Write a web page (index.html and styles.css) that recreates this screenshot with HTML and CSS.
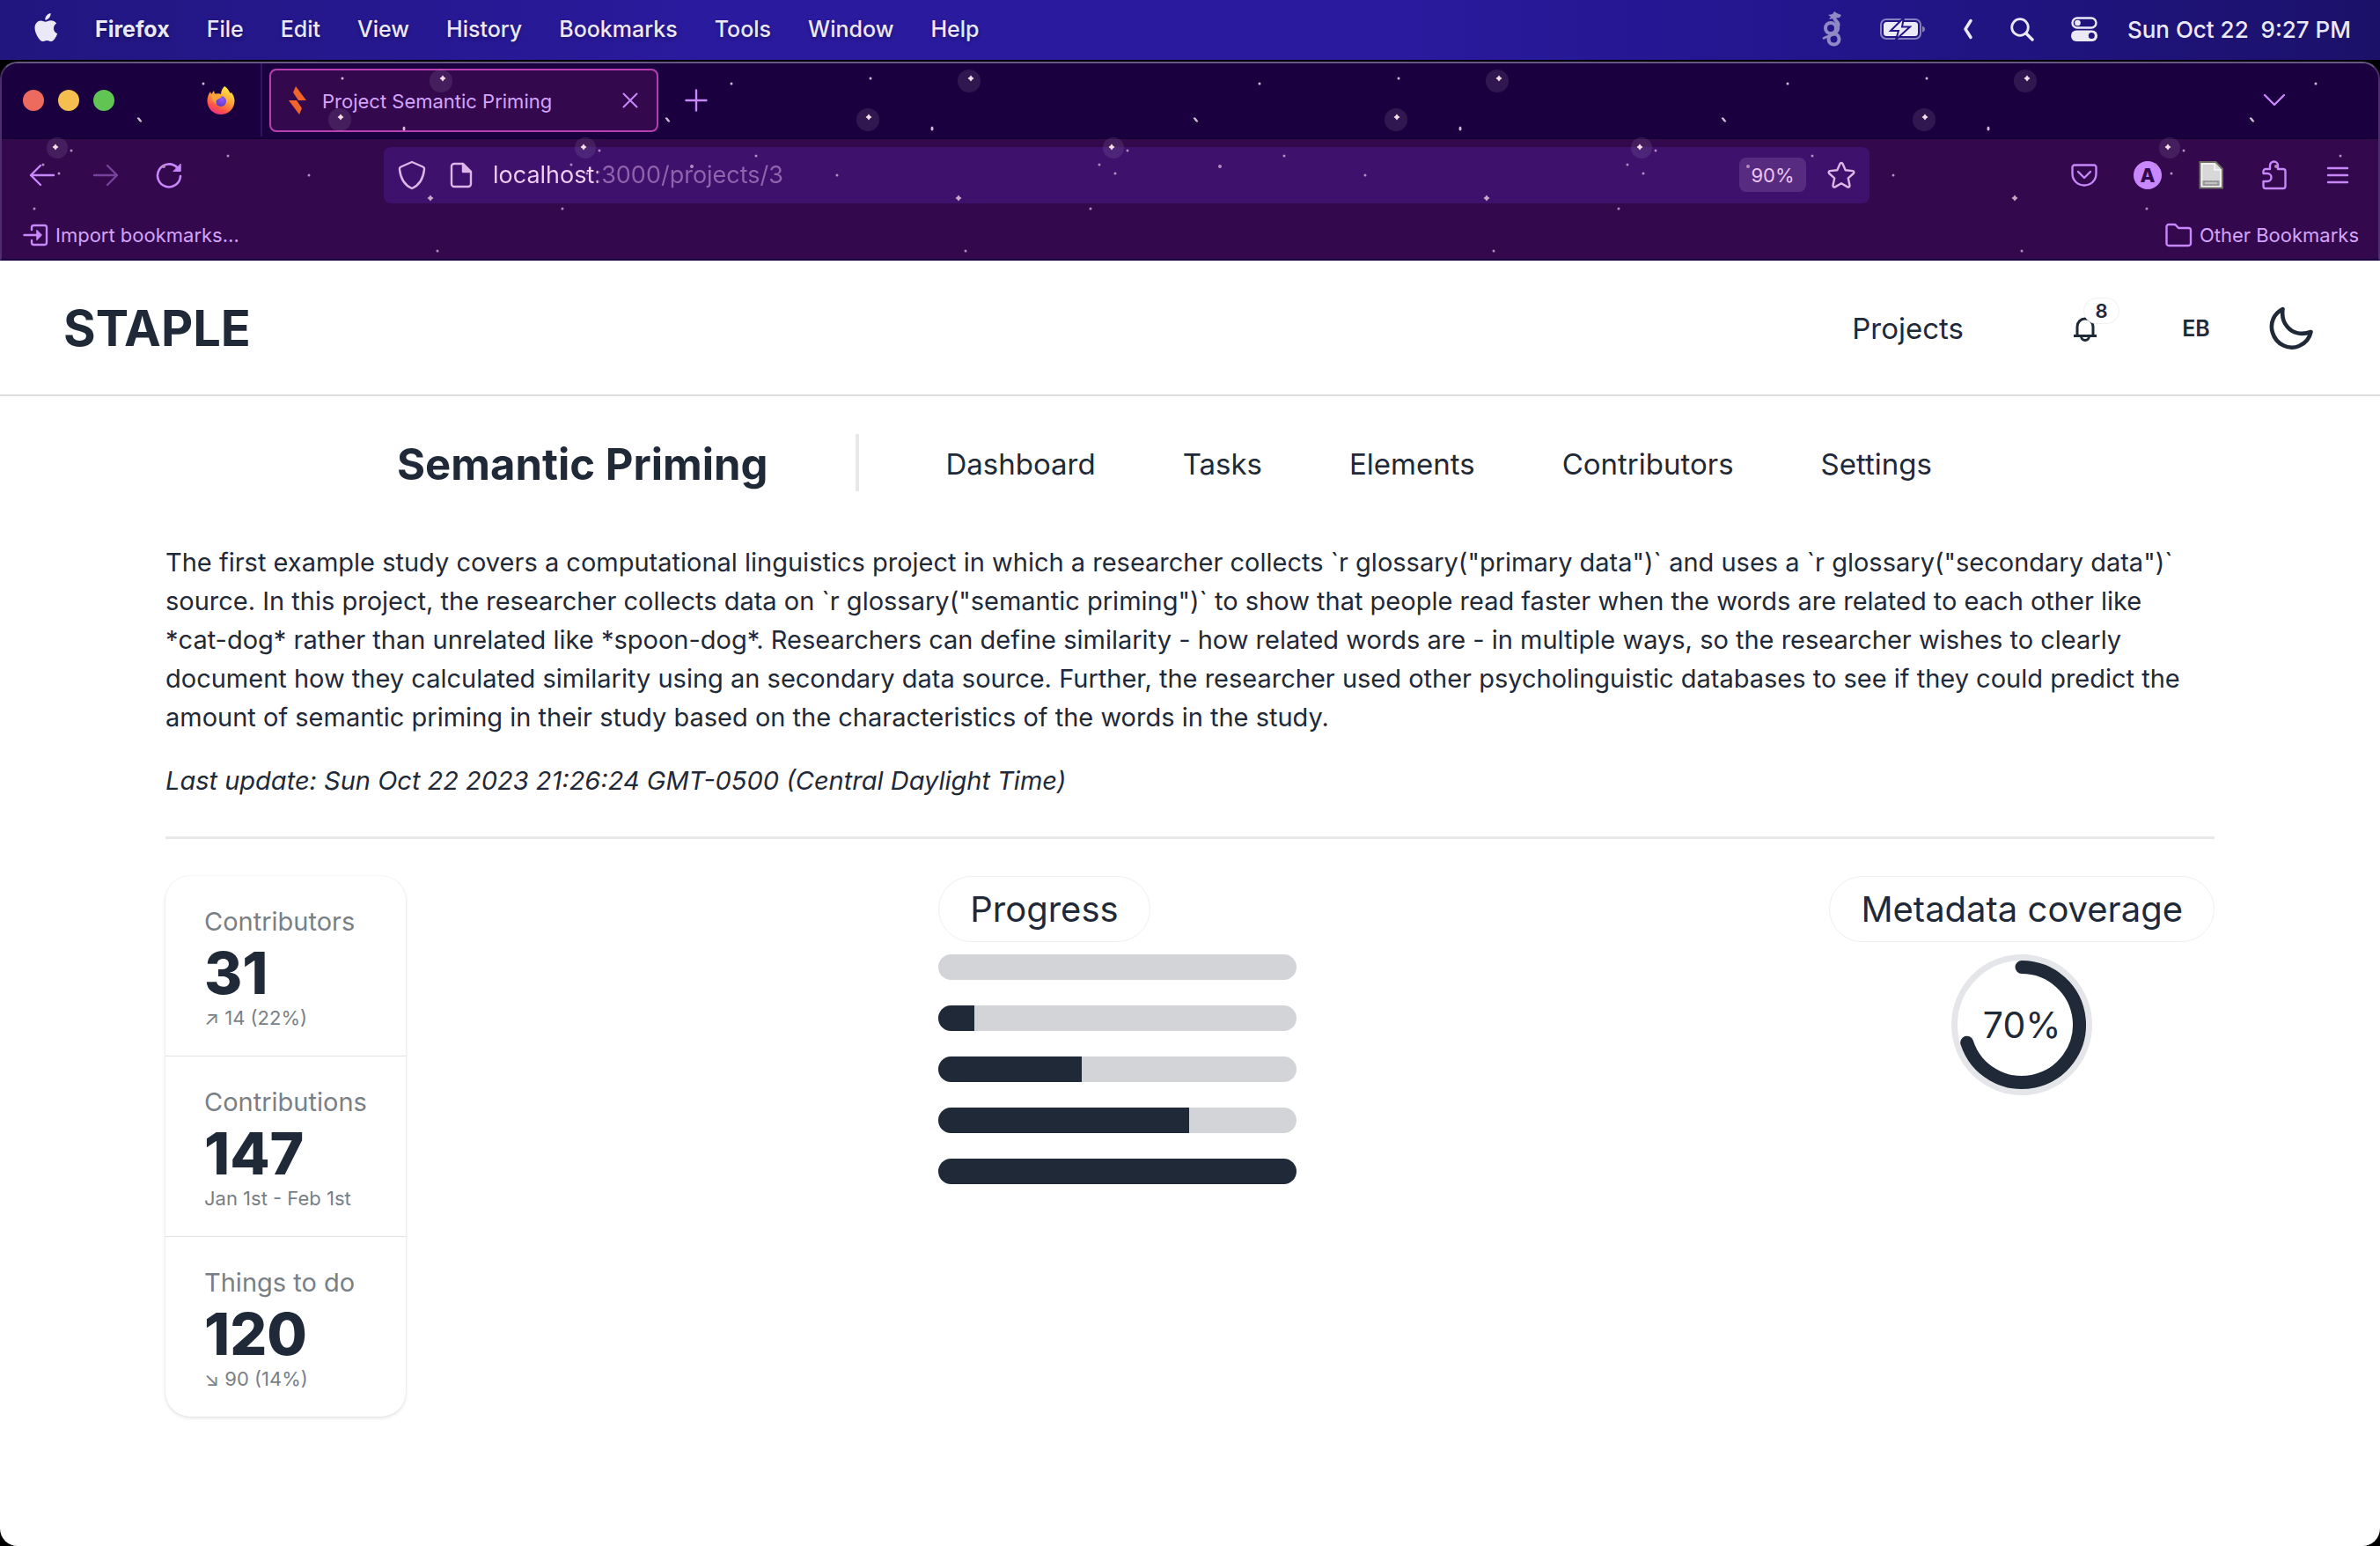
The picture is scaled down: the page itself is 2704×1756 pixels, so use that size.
FILE: index.html
```html
<!DOCTYPE html>
<html lang="en">
<head>
<meta charset="utf-8">
<title>Project Semantic Priming</title>
<link rel="stylesheet" href="styles.css">
</head>
<body>
<header class="menubar">
  <nav class="menubar-menus" aria-label="Application menu">
    <button class="menu apple" aria-label="Apple menu">
      <svg width="28" height="34" viewBox="0 0 28 34" fill="currentColor"><path d="M19.6 0c.2 2-.6 3.900-1.800 5.300-1.200 1.500-2.900 2.500-4.500 2.300-.2-1.900.7-3.800 1.800-5.100C16.300 1.200 18.200.1 19.600 0z"/><path d="M26.300 11.600c-2.100 1.300-3.300 3.200-3.300 5.700 0 2.800 1.600 5 4.200 6-.6 1.900-1.600 3.800-2.800 5.500-1.300 1.900-2.500 3.200-4.300 3.200-1.900 0-2.500-1.100-4.800-1.100-2.300 0-3 1.100-4.800 1.100-1.900 0-3.300-1.700-4.600-3.600C3.500 25 1.500 20.600 1.500 16.800c0-5.300 3.400-8.400 6.900-8.400 2.200 0 3.900 1.300 5.400 1.300 1.400 0 3.300-1.500 5.900-1.500 2.400 0 5 1.100 6.600 3.400z"/></svg>
    </button>
    <button class="menu app-name">Firefox</button>
    <button class="menu">File</button>
    <button class="menu">Edit</button>
    <button class="menu">View</button>
    <button class="menu">History</button>
    <button class="menu">Bookmarks</button>
    <button class="menu">Tools</button>
    <button class="menu">Window</button>
    <button class="menu">Help</button>
  </nav>
  <div class="menubar-status">
    <svg class="dim" width="24" height="40" viewBox="0 0 24 40" fill="none" stroke="currentColor"><circle cx="10" cy="19" r="6" stroke-width="4"/><circle cx="13.500" cy="31.500" r="6" stroke-width="4"/><path d="M16 13c5 5 3 10-2 13-4 2-9 2-13 5" stroke-width="2.500"/><path d="M18 17c3-5-5-6-4-11" stroke-width="4"/><path d="M7 4l5-1 2-3 3 2 5 2-2 3-7 1-5 1 2-3z" fill="currentColor" stroke="none"/></svg>
    <svg width="52" height="26" viewBox="0 0 52 26"><rect x="1" y="2" width="45" height="22" rx="6" fill="none" stroke="currentColor" stroke-width="2" opacity=".5"/><rect x="4" y="5" width="39" height="16" rx="3.500" fill="currentColor"/><path d="M48 9.500c4 1.300 4 6 0 7.200z" fill="currentColor" opacity=".5"/><path d="M27 0L12 15h9l-3 10L34 10.500h-9z" fill="currentColor" stroke="#231589" stroke-width="2"/></svg>
    <svg width="12" height="24" viewBox="0 0 12 24" fill="none" stroke="currentColor" stroke-width="3.500" stroke-linecap="round" stroke-linejoin="round"><path d="M9 2.500L3 12l6 9.500"/></svg>
    <svg width="27" height="27" viewBox="0 0 27 27" fill="none" stroke="currentColor" stroke-width="2.800" stroke-linecap="round"><circle cx="11" cy="11" r="9.300"/><path d="M18 18l7 7" stroke-width="3.500"/></svg>
    <svg width="30" height="28" viewBox="0 0 30 28"><rect x="1.500" y="1.500" width="27" height="11" rx="5.500" fill="none" stroke="currentColor" stroke-width="2.400"/><circle cx="7.500" cy="7" r="3.300" fill="currentColor"/><rect y="15.500" width="30" height="12.500" rx="6" fill="currentColor"/><circle cx="23.300" cy="21.500" r="3.500" fill="#211480"/></svg>
    <time class="clock">Sun Oct 22&nbsp; 9:27 PM</time>
  </div>
</header>

<section class="chrome" aria-label="Browser">
  <div class="tabstrip">
    <div class="lights">
      <button class="light close" aria-label="Close window"></button>
      <button class="light minimise" aria-label="Minimise window"></button>
      <button class="light expand" aria-label="Expand window"></button>
    </div>
    <button class="pinned" aria-label="Firefox View">
      <svg width="32" height="32" viewBox="0 0 32 32">
        <defs>
          <linearGradient id="fire" x1=".8" y1="0" x2=".3" y2="1"><stop offset="0" stop-color="#fff44f"/><stop offset=".45" stop-color="#ffa436"/><stop offset=".8" stop-color="#ff4f4a"/><stop offset="1" stop-color="#e8308a"/></linearGradient>
          <radialGradient id="globe" cx=".6" cy=".3" r=".8"><stop offset="0" stop-color="#9059ff"/><stop offset="1" stop-color="#5a37b8"/></radialGradient>
        </defs>
        <path d="M20 0c5 3 5 6 7 8l1-1c2 3 3.500 6 3.500 9.500C31.500 25 25 32 16 32S.5 25 .5 16.500C.5 12 2 9 4 6l1 3 3-4 1 4c3-1 5-1 7 0 0-4 2-7 4-9z" fill="url(#fire)"/>
        <circle cx="16" cy="17" r="6" fill="url(#globe)"/>
        <path d="M5 10c3-2 6-2 8 0l4 1c-1 3-4 3-5 4-2 1-2 3-1 5-4-2-6-6-6-10z" fill="#ffa436"/>
      </svg>
    </button>
    <div class="tab">
      <svg width="20" height="32" viewBox="0 0 20 32" fill="#f0652b"><path d="M8 0l12 16H11L5 7z"/><path d="M0 16h9l6 9-3 7z"/></svg>
      <span class="tab-title">Project Semantic Priming</span>
      <button class="icon-button small" aria-label="Close tab"><svg width="18" height="18" viewBox="0 0 18 18" fill="none" stroke="currentColor" stroke-width="2" stroke-linecap="round"><path d="M1.500 1.500l15 15M16.500 1.500l-15 15"/></svg></button>
    </div>
    <button class="icon-button new-tab" aria-label="New tab"><svg width="26" height="26" viewBox="0 0 26 26" fill="none" stroke="currentColor" stroke-width="2.400" stroke-linecap="round"><path d="M13 1.500v23M1.500 13h23"/></svg></button>
    <button class="icon-button list-tabs" aria-label="List all tabs"><svg width="26" height="16" viewBox="0 0 26 16" fill="none" stroke="currentColor" stroke-width="2.400" stroke-linecap="round" stroke-linejoin="round"><path d="M2 2l11 11L24 2"/></svg></button>
  </div>

  <div class="toolbar">
    <div class="tools">
      <button class="icon-button" aria-label="Back"><svg width="30" height="26" viewBox="0 0 30 26" fill="none" stroke="currentColor" stroke-width="2.400" stroke-linecap="round" stroke-linejoin="round"><path d="M28 13H2M13 2L2 13l11 11"/></svg></button>
      <button class="icon-button faded" aria-label="Forward"><svg width="30" height="26" viewBox="0 0 30 26" fill="none" stroke="currentColor" stroke-width="2.400" stroke-linecap="round" stroke-linejoin="round"><path d="M2 13h26M17 2l11 11-11 11"/></svg></button>
      <button class="icon-button" aria-label="Reload"><svg width="30" height="30" viewBox="0 0 30 30" fill="none" stroke="currentColor" stroke-width="2.600" stroke-linecap="round" stroke-linejoin="round"><path d="M24.500 6.500A13 13 0 1 0 28 16"/><path d="M28.200 2.500v8h-8z" fill="currentColor" stroke-width="1"/></svg></button>
    </div>
    <div class="address">
      <svg width="32" height="34" viewBox="0 0 32 34" fill="none" stroke="currentColor" stroke-width="2.400" stroke-linejoin="round"><path d="M16 2l12.500 5.500c1.200.5 1.700 1.500 1.500 3C29 20 25 28 16 32 7 28 3 20 2 10.500c-.2-1.500.3-2.500 1.500-3z"/></svg>
      <svg width="26" height="30" viewBox="0 0 26 30" fill="none" stroke="currentColor" stroke-width="2.400" stroke-linejoin="round"><path d="M5 2h10l9 9v14a3 3 0 0 1-3 3H5a3 3 0 0 1-3-3V5a3 3 0 0 1 3-3z"/><path d="M15 2v9h9z" fill="currentColor"/></svg>
      <input class="url" type="text" aria-label="Address" value="localhost:3000/projects/3">
      <button class="zoom">90%</button>
      <button class="icon-button" aria-label="Bookmark this page"><svg width="34" height="32" viewBox="0 0 34 32" fill="none" stroke="currentColor" stroke-width="2.400" stroke-linejoin="round"><path d="M15.500 3c.6-1.300 2.400-1.300 3 0l3.200 7.200 8.200.9c1.500.2 2 1.900.9 2.900l-6 5.400 1.700 8.200c.3 1.500-1.200 2.500-2.400 1.800L17 25.200l-7.100 4.200c-1.200.7-2.700-.3-2.400-1.800l1.700-8.200-6-5.400c-1.100-1-.6-2.700.9-2.900l8.200-.9z"/></svg></button>
    </div>
    <div class="tools">
      <button class="icon-button" aria-label="Save to Pocket"><svg width="30" height="26" viewBox="0 0 30 26" fill="none" stroke="currentColor" stroke-width="2.400" stroke-linecap="round" stroke-linejoin="round"><path d="M4 1.500h22a2.500 2.500 0 0 1 2.500 2.500v7c0 8-6 13.500-13.500 13.500S1.500 19 1.500 11V4A2.500 2.500 0 0 1 4 1.500z"/><path d="M8 9l7 7 7-7"/></svg></button>
      <button class="icon-button" aria-label="Account"><span class="avatar">A</span></button>
      <button class="icon-button" aria-label="Page extension"><svg width="28" height="32" viewBox="0 0 28 32"><path d="M1.500 1h18l7.500 8v21.500h-25.500z" fill="#dedede" stroke="#6e6e62" stroke-width="2"/><path d="M3.500 3h14.500v7h7v18.500h-21.500z" fill="#d8d8d8" stroke="#f8f8f8" stroke-width="1.500"/><rect x="4.500" y="22" width="19" height="6" fill="#999"/><rect x="7" y="24" width="14" height="2" fill="#c4c4c4"/></svg></button>
      <button class="icon-button" aria-label="Extensions"><svg width="28" height="34" viewBox="0 0 28 34" fill="none" stroke="currentColor" stroke-width="2.400" stroke-linejoin="round"><path d="M4 10h5V6a4.500 4.500 0 0 1 9 0v4h6a2.500 2.500 0 0 1 2.500 2.500v17A2.500 2.500 0 0 1 24 32H4a2.500 2.500 0 0 1-2.500-2.500V24H6a4.500 4.500 0 0 0 0-9H1.500v-2.500A2.500 2.500 0 0 1 4 10z"/></svg></button>
      <button class="icon-button" aria-label="Open application menu"><svg width="26" height="22" viewBox="0 0 26 22" fill="none" stroke="currentColor" stroke-width="2.400" stroke-linecap="round"><path d="M2 3h22M2 11h22M2 19h22"/></svg></button>
    </div>
  </div>

  <div class="bookmarks">
    <button class="bookmark"><svg width="29" height="26" viewBox="0 0 29 26" fill="none" stroke="currentColor" stroke-width="2.400" stroke-linecap="round" stroke-linejoin="round"><path d="M10 7V4.500A2.500 2.500 0 0 1 12.500 2h12A2.500 2.500 0 0 1 27 4.500v17a2.500 2.500 0 0 1-2.500 2.500h-12a2.500 2.500 0 0 1-2.500-2.500V19M1.500 13H16"/><path d="M16 7.500l5.500 5.500-5.500 5.500z" fill="currentColor" stroke-width="1"/></svg>Import bookmarks…</button>
    <button class="bookmark"><svg width="31" height="28" viewBox="0 0 31 28" fill="none" stroke="currentColor" stroke-width="2.400" stroke-linejoin="round"><path d="M4 2h6c1 0 1.800.4 2.300 1l2.700 3H26.500A2.500 2.500 0 0 1 29 8.500v15a2.500 2.500 0 0 1-2.500 2.500H4a2.500 2.500 0 0 1-2.500-2.500v-19A2.500 2.500 0 0 1 4 2z"/></svg>Other Bookmarks</button>
  </div>

  <svg class="stars" width="100%" height="100%" aria-hidden="true">
    <defs>
      <pattern id="sky" width="600" height="400" patternUnits="userSpaceOnUse" patternTransform="translate(-2 -72)">
        <g fill="#fff" fill-opacity=".09"><circle cx="501" cy="92" r="13"/><circle cx="386" cy="136" r="13"/><circle cx="65" cy="168" r="12"/></g>
        <g fill="#f6dfe8"><path id="spark" d="M503 85.500l1.500 2 2 1.500-2 1.500-1.500 2-1.500-2-2-1.500 2-1.500z"/><use href="#spark" x="-116" y="44"/><use href="#spark" x="-440" y="78"/><use href="#spark" x="-14" y="136" opacity=".75"/></g>
        <g fill="#d9b8d8"><circle cx="231" cy="95" r="1.500"/><circle cx="389" cy="89" r="1.500"/><ellipse cx="459" cy="146" rx="1.500" ry="2.500"/><path d="M156 134l2 0 3 4-2 0z" stroke="#d9b8d8"/></g>
        <g fill="#b98abf"><circle cx="81" cy="171" r="1.500"/><circle cx="49" cy="187" r="1.500"/><circle cx="67" cy="197" r="1.500"/><circle cx="259" cy="177" r="1.500"/><circle cx="351" cy="199" r="1.500"/><circle cx="186" cy="189" r="2"/><circle cx="39" cy="237" r="1.500"/><circle cx="497" cy="285" r="1.500"/></g>
      </pattern>
    </defs>
    <rect width="100%" height="100%" fill="url(#sky)"/>
  </svg>
</section>

<div class="page">
  <header class="site-header">
    <a class="brand" href="#">STAPLE</a>
    <nav class="site-nav">
      <a class="projects" href="#">Projects</a>
      <button class="round" aria-label="Notifications">
        <svg width="28" height="32" viewBox="0 0 28 32" fill="none" stroke="currentColor" stroke-width="3" stroke-linejoin="round"><path d="M5 23.500V14a9 9 0 0 1 18 0v9.500"/><path d="M1 24.500h26M9.500 25a4.500 4.500 0 0 0 9 0"/></svg>
        <span class="badge">8</span>
      </button>
      <button class="round">EB</button>
      <button class="theme" aria-label="Toggle theme"><svg width="50" height="50" viewBox="0 0 50 50" fill="none" stroke="currentColor" stroke-width="4.600" stroke-linejoin="round"><path d="M15.500 3C5.500 8 .5 19 4 30c4 13 18 20 30 15 7-3 12-9 13.500-16C37 33 27 30.500 21 23.500 16 18 14.500 10 15.500 3z"/></svg></button>
    </nav>
  </header>

  <main class="content">
    <nav class="project-nav">
      <h1 class="project-title">Semantic Priming</h1>
      <ul class="project-links">
        <li><a href="#">Dashboard</a></li>
        <li><a href="#">Tasks</a></li>
        <li><a href="#">Elements</a></li>
        <li><a href="#">Contributors</a></li>
        <li><a href="#">Settings</a></li>
      </ul>
    </nav>

    <p class="description">The first example study covers a computational linguistics project in which a researcher collects `r glossary("primary data")` and uses a `r glossary("secondary data")` source. In this project, the researcher collects data on `r glossary("semantic priming")` to show that people read faster when the words are related to each other like <span class="term">*cat-dog*</span> rather than unrelated like <span class="term">*spoon-dog*</span>. Researchers can define similarity - how related words are - in multiple ways, so the researcher wishes to clearly document how they calculated similarity using an secondary data source. Further, the researcher used other psycholinguistic databases to see if they could predict the amount of semantic priming in their study based on the characteristics of the words in the study.</p>
    <p class="updated">Last update: Sun Oct 22 2023 21:26:24 GMT-0500 (Central Daylight Time)</p>
    <hr class="rule">

    <div class="widgets">
      <dl class="stats">
        <div class="stat"><dt>Contributors</dt><dd class="value">31</dd><dd class="note">↗︎ 14 (22%)</dd></div>
        <div class="stat"><dt>Contributions</dt><dd class="value">147</dd><dd class="note">Jan 1st - Feb 1st</dd></div>
        <div class="stat"><dt>Things to do</dt><dd class="value">120</dd><dd class="note">↘︎ 90 (14%)</dd></div>
      </dl>
      <section class="widget">
        <h2 class="pill">Progress</h2>
        <div class="bars">
          <progress class="bar" value="0" max="100" aria-label="Step 1"></progress>
          <progress class="bar" value="10" max="100" aria-label="Step 2"></progress>
          <progress class="bar" value="40" max="100" aria-label="Step 3"></progress>
          <progress class="bar" value="70" max="100" aria-label="Step 4"></progress>
          <progress class="bar" value="100" max="100" aria-label="Step 5"></progress>
        </div>
      </section>
      <section class="widget centered">
        <h2 class="pill">Metadata coverage</h2>
        <div class="radial">
          <svg width="160" height="160" viewBox="0 0 160 160" fill="none"><circle cx="80" cy="80" r="76.500" stroke="#e5e6ea" stroke-width="7"/><path d="M80 14.500A65.500 65.500 0 1 1 17.700 100.200" stroke="#1f2937" stroke-width="15" stroke-linecap="round"/></svg>
          <span class="percent">70%</span>
        </div>
      </section>
    </div>
  </main>
</div>
</body>
</html>
```
FILE: styles.css
```css
* { box-sizing: border-box; }

body {
  margin: 0;
  min-height: 100vh;
  display: flex;
  flex-direction: column;
  background: #000;
  color: #1f2937;
  font-family: Inter, "Liberation Sans", sans-serif;
  font-size: 29px;
}

button {
  padding: 0;
  border: 0;
  background: none;
  color: inherit;
  font: inherit;
}

a { color: inherit; text-decoration: none; }
svg { display: block; flex: none; }

/* System menu bar */
.menubar {
  display: flex;
  justify-content: space-between;
  align-items: center;
  height: 68px;
  margin-bottom: 2px;
  padding: 0 33px 2px 38px;
  background: linear-gradient(90deg, #21167f 0%, #2a1a9e 30%, #2a1a9e 58%, #22158a 78%, #1b1169 100%);
  color: #ebe9f7;
  font-size: 25px;
  font-weight: 500;
}
.menubar-menus { display: flex; align-items: center; gap: 42px; }
.menu { text-shadow: 0 2px 4px rgba(0, 0, 0, .3); }
.menu.apple svg { margin-bottom: 2px; }
.menu.app-name { font-weight: 700; }
.menubar-status { display: flex; align-items: center; gap: 42px; }
.menubar-status .dim { opacity: .55; }
.clock { margin-left: -8px; font-size: 26px; }

/* Browser window */
.chrome {
  position: relative;
  overflow: hidden;
  border: 2px solid #4d2d6a;
  border-top-color: #665682;
  border-bottom-color: #1a0040;
  border-radius: 20px 20px 0 0;
  background: #33084d;
  color: #c887fb;
}
.stars { position: absolute; inset: 0; pointer-events: none; }

.tabstrip {
  display: flex;
  align-items: center;
  height: 86px;
  padding: 0 98px 2px 24px;
  border-bottom: 1px solid #14002f;
  background: #1b003f;
}
.lights { display: flex; gap: 16px; }
.light { width: 24px; height: 24px; border-radius: 50%; }
.light.close { background: #ed6a5e; }
.light.minimise { background: #f5bf4f; }
.light.expand { background: #61c554; }
.pinned {
  display: flex;
  align-items: center;
  justify-content: center;
  align-self: stretch;
  width: 92px;
  margin-left: 76px;
  border-right: 2px solid #321562;
}
.tab {
  display: flex;
  align-items: center;
  width: 442px;
  height: 72px;
  margin-left: 8px;
  padding: 0 14px 0 20px;
  border: 2px solid #b83fb1;
  border-radius: 8px;
  background: #33084d;
}
.tab-title {
  flex: 1;
  margin-left: 18px;
  padding-top: 2px;
  color: #d4a4fc;
  font-size: 22px;
  white-space: nowrap;
}
.icon-button {
  display: flex;
  align-items: center;
  justify-content: center;
  width: 40px;
  height: 40px;
}
.icon-button.small { width: 32px; }
.icon-button.faded { opacity: .45; }
.new-tab { margin-left: 23px; }
.list-tabs { margin-left: auto; }

.toolbar { display: flex; align-items: center; height: 81px; padding: 0 26px; }
.tools { display: flex; gap: 32px; }
.address {
  display: flex;
  align-items: center;
  flex: 1;
  height: 64px;
  margin: 0 224px;
  padding: 0 12px 0 16px;
  border-radius: 8px;
  background: #3d116c;
  color: #dfb5e6;
}
.address > svg + svg { margin-left: 27px; }
.url {
  flex: 1;
  min-width: 0;
  margin: 0 22px 0 23px;
  padding: 0;
  border: 0;
  outline: 0;
  background: linear-gradient(90deg, #f3cff3 119px, #9263ac 119px);
  background-clip: text;
  color: transparent;
  font: inherit;
  font-size: 27px;
}
.zoom {
  width: 76px;
  height: 39px;
  margin-right: 20px;
  border-radius: 8px;
  background: #572b80;
  color: #edc6f0;
  font-size: 22px;
}
.avatar {
  display: flex;
  align-items: center;
  justify-content: center;
  width: 32px;
  height: 32px;
  border-radius: 50%;
  background: #c887fb;
  color: #33084d;
  font-size: 22px;
  font-weight: 800;
}
.bookmarks { display: flex; justify-content: space-between; height: 55px; padding: 0 22px 0 24px; }
.bookmark { display: flex; align-items: center; gap: 8px; color: #d4a4fc; font-size: 22px; }
.bookmark svg { color: #c887fb; }

/* Page */
.page { flex: 1; border-radius: 0 0 20px 20px; background: #fff; }
.site-header {
  display: flex;
  align-items: center;
  justify-content: space-between;
  height: 154px;
  padding: 2px 76px 0 72px;
  border-bottom: 2px solid #dcdcdd;
}
.brand { font-size: 56px; font-weight: 700; }
.site-nav { display: flex; align-items: center; gap: 40px; }
.projects { margin-right: 55px; font-size: 33px; }
.round {
  position: relative;
  display: flex;
  align-items: center;
  justify-content: center;
  width: 86px;
  height: 86px;
  border-radius: 50%;
  font-size: 25px;
  font-weight: 600;
}
.badge {
  position: absolute;
  top: 8px;
  right: 4px;
  width: 41px;
  height: 30px;
  border: 1px solid #f0f0f1;
  border-radius: 15px;
  background: #fff;
  font-size: 22px;
  line-height: 29px;
  text-align: center;
}

.content { padding: 43px 188px 80px; }
.project-nav { display: flex; align-items: stretch; justify-content: center; height: 65px; padding-right: 58px; }
.project-title {
  margin: 0;
  padding-right: 100px;
  border-right: 4px solid #e8e8e9;
  font-size: 49px;
  font-weight: 700;
  line-height: 70px;
}
.project-links {
  display: flex;
  gap: 99px;
  margin: 0;
  padding: 0 0 0 98px;
  list-style: none;
  font-size: 33px;
  line-height: 68px;
}
.description, .updated { margin: 59px 0 0; line-height: 44px; }
.term { white-space: nowrap; }
.updated { margin-top: 28px; font-style: italic; }
.rule { height: 3px; margin: 41px 0 42px; border: 0; background: #e8e8e9; }

.widgets { display: flex; align-items: flex-start; justify-content: space-between; }
.stats {
  width: 273px;
  margin: 0;
  border-radius: 28px;
  background: #fff;
  box-shadow: 0 2px 4px rgba(0, 0, 0, .1), 0 0 2px rgba(0, 0, 0, .08);
}
.stat { padding: 30px 0 28px 44px; white-space: nowrap; }
.stat + .stat { border-top: 1px solid #e2e2e4; }
.stat dt { color: #797f87; font-size: 29px; line-height: 44px; }
.stat dd { margin: 0; }
.stat .value { font-size: 66px; font-weight: 800; line-height: 72px; }
.stat .note { color: #797f87; font-size: 22px; line-height: 30px; }

.widget { display: flex; flex-direction: column; align-items: flex-start; gap: 14px; }
.widget.centered { align-items: center; }
.pill {
  margin: 0;
  padding: 0 35px;
  border: 1px solid #efeff0;
  border-radius: 38px;
  font-size: 40px;
  font-weight: 400;
  line-height: 73px;
}
.bars { display: flex; flex-direction: column; gap: 29px; width: 407px; }
.bar {
  appearance: none;
  width: 100%;
  height: 29px;
  overflow: hidden;
  border: 0;
  border-radius: 15px;
  background: #d3d4d8;
}
.bar::-webkit-progress-bar { background: #d3d4d8; }
.bar::-webkit-progress-value { background: #1f2937; }
.radial { display: grid; place-items: center; }
.radial > * { grid-area: 1 / 1; }
.percent { font-size: 41px; }
```
